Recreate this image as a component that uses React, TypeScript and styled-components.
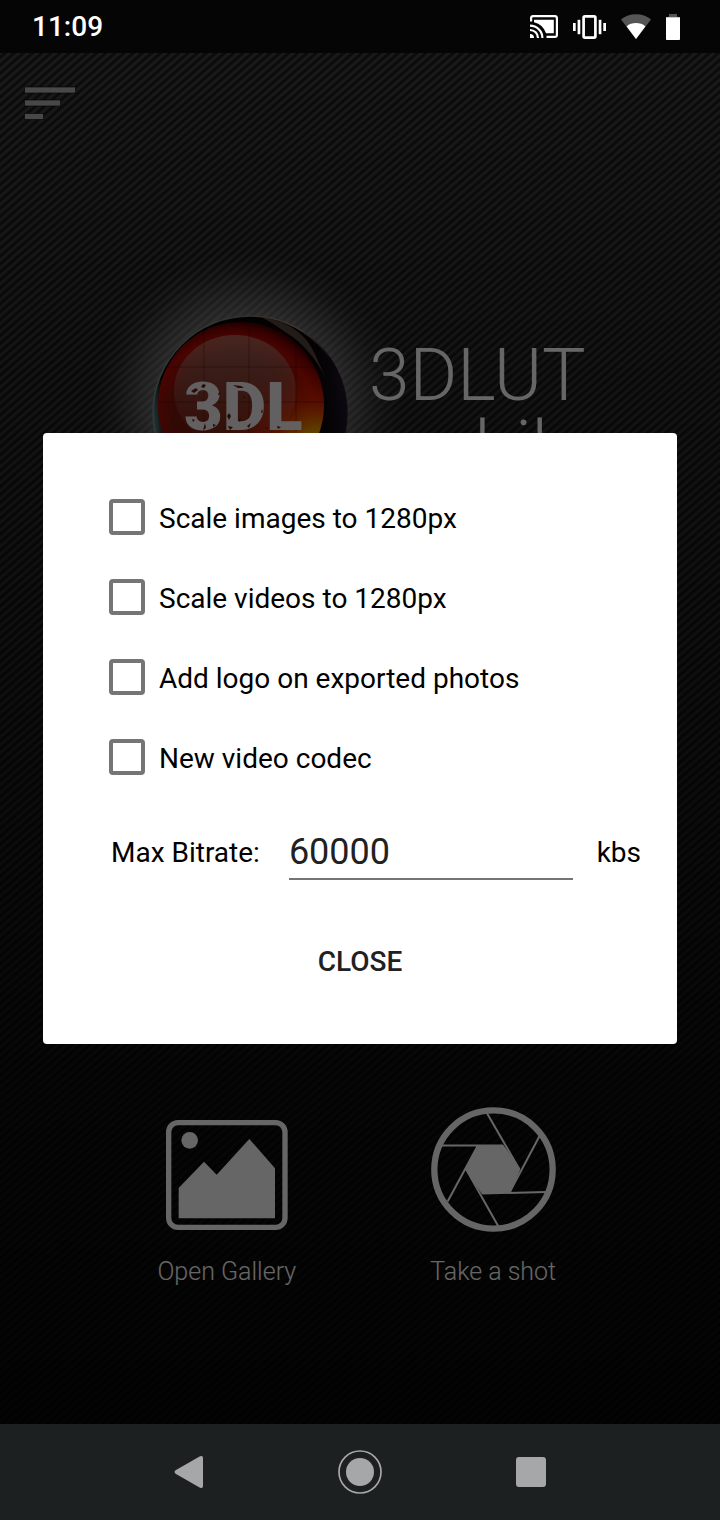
import React from "react";
import styled, { createGlobalStyle } from "styled-components";

const GlobalStyle = createGlobalStyle`
  * { box-sizing: border-box; }
  body { margin: 0; background: #000; font-family: Roboto, sans-serif; }
  button { padding: 0; border: 0; background: none; font: inherit; color: inherit; }
  svg { display: block; }
`;

const Screen = styled.div`
  display: flex;
  flex-direction: column;
  min-height: 100vh;
`;

const StatusBar = styled.header`
  display: flex;
  align-items: center;
  justify-content: space-between;
  height: 53px;
  padding: 0 40px 0 32px;
  background: #050505;
  color: #fff;
`;

const Clock = styled.time`
  font-size: 28px;
  font-weight: 500;
  line-height: 36px;
`;

const StatusIcons = styled.div`
  display: flex;
  align-items: center;
  gap: 15px;
`;

const Stage = styled.div`
  position: relative;
  flex: 1;
  display: flex;
  flex-direction: column;
`;

const Home = styled.main`
  flex: 1;
  display: flex;
  flex-direction: column;
  padding-bottom: 134px;
  overflow: hidden;
  color: #fff;
  background:
    linear-gradient(to bottom, rgba(0, 0, 0, 0) 0%, rgba(0, 0, 0, 0.35) 35%, rgba(0, 0, 0, 0.72) 75%, rgba(0, 0, 0, 0.84) 100%),
    repeating-linear-gradient(139deg, #464646 0px, #424242 1px, #1c1c1c 3px, #1c1c1c 4px, #464646 6px);
`;

const MenuButton = styled.button`
  align-self: flex-start;
  margin: 32px 0 0 24px;
`;

const Brand = styled.section`
  display: flex;
  justify-content: center;
  gap: 20px;
  margin-top: 194px;
  padding-left: 18px;
`;

const BrandName = styled.h1`
  width: 216px;
  margin: 24px 0 0;
  font-size: 73px;
  font-weight: 300;
  line-height: 72px;
`;

const Actions = styled.nav`
  display: flex;
  align-items: flex-end;
  margin-top: auto;
  padding: 0 13%;
`;

const Action = styled.button`
  flex: 1;
  display: flex;
  flex-direction: column;
  align-items: center;
  gap: 22px;
  font-size: 25px;
  font-weight: 300;
  line-height: 36px;
`;

const Scrim = styled.div`
  position: absolute;
  inset: 0;
  display: flex;
  align-items: center;
  padding: 0 43px;
  background: rgba(0, 0, 0, 0.6);
`;

const Dialog = styled.form`
  flex: 1;
  min-width: 0;
  display: flex;
  flex-direction: column;
  padding: 44px 36px 35px 66px;
  border-radius: 4px;
  background: #fff;
  color: #000;
  font-size: 28px;
`;

const Option = styled.label`
  display: flex;
  align-items: center;
  gap: 14px;
  height: 80px;
`;

const OptionText = styled.span`
  padding-top: 2px;
`;

const Checkbox = styled.input`
  appearance: none;
  width: 36px;
  height: 36px;
  margin: 0;
  border: 4px solid #757575;
  border-radius: 4px;
  &:checked { background: #757575; }
`;

const BitrateRow = styled.div`
  display: flex;
  align-items: center;
  height: 80px;
  margin-top: 15px;
  padding-left: 2px;
`;

const BitrateInput = styled.input`
  flex: 1;
  min-width: 0;
  height: 56px;
  margin: 0 24px 0 29px;
  padding: 2px 0 0;
  border: 0;
  border-bottom: 2px solid #757575;
  border-radius: 0;
  outline: 0;
  background: none;
  color: #212121;
  font: 36px Roboto, sans-serif;
`;

const CloseButton = styled.button`
  align-self: center;
  height: 96px;
  margin: 21px 30px 0 0;
  padding: 0 32px;
  color: #212121;
  font-weight: 500;
`;

const NavBar = styled.nav`
  display: flex;
  height: 96px;
  padding: 0 104px;
  background: #1c2021;
`;

const NavButton = styled.button`
  flex: 1;
  display: flex;
  align-items: center;
  justify-content: center;
`;

const CastIcon = () => (
  <svg width="28" height="23" viewBox="0 0 28 23" fill="none" stroke="#fff" strokeWidth="2.2">
    <path d="M1.1 6.5V3a2 2 0 0 1 2-1.9h21.8a2 2 0 0 1 2 1.900v17a2 2 0 0 1-2 1.900H16.500" />
    <path d="M4 4.800h19.800v13.500H16A16.500 16.500 0 0 0 4 7.200z" fill="#fff" stroke="none" />
    <path d="M0 19a4 4 0 0 1 4 4H0z" fill="#fff" stroke="none" />
    <path d="M0 15a8 8 0 0 1 8 8M0 10.600A12.400 12.400 0 0 1 12.400 23" />
  </svg>
);

const VibrateIcon = () => (
  <svg width="33" height="24" viewBox="0 0 33 24" fill="#fff">
    <rect x="10.6" y="1.4" width="11.8" height="21.2" rx="1.4" fill="none" stroke="#fff" strokeWidth="2.7" />
    <rect x="0" y="8" width="2.7" height="8" />
    <rect x="4.6" y="4.8" width="2.7" height="14.4" />
    <rect x="25.7" y="4.8" width="2.7" height="14.4" />
    <rect x="30.3" y="8" width="2.7" height="8" />
  </svg>
);

const WifiIcon = () => (
  <svg width="30" height="25" viewBox="0 0 30 25">
    <path d="M15 25L0 5.6C8-1.5 22-1.5 30 5.6z" fill="#555" />
    <path d="M15 25L5.6 12.4C10.5 8 19.5 8 24.4 12.4z" fill="#fff" />
  </svg>
);

const BatteryIcon = () => (
  <svg width="14" height="26" viewBox="0 0 14 26">
    <path d="M0 3.5L3 2.5V0h8v2.5l3 1z" fill="#555" />
    <path d="M0 3.3h14V25.2a.8.8 0 0 1-.8.8H.8a.8.8 0 0 1-.8-.8z" fill="#fff" />
  </svg>
);

const MenuIcon = () => (
  <svg width="54" height="36" viewBox="0 0 54 36" fill="#b4b4b4" stroke="#000" strokeOpacity="0.6">
    <rect x="0.5" y="2" width="51" height="6" />
    <rect x="0.5" y="15" width="36" height="6" />
    <rect x="0.5" y="28.500" width="19" height="6" />
  </svg>
);

const GalleryIcon = () => (
  <svg width="122" height="112" viewBox="79 59 366 336" fill="#fff">
    <rect x="87" y="67" width="349" height="314" rx="28" fill="none" stroke="#fff" strokeWidth="16" />
    <circle cx="150" cy="120" r="25" />
    <path d="M117 263L193 184l38 39 98-107 77 88v150H117z" />
  </svg>
);

const ApertureIcon = () => (
  <svg width="125" height="125" viewBox="62 50 376 376" fill="none" stroke="#fff">
    <circle cx="250" cy="238" r="178" strokeWidth="19" />
    <path
      d="M230 68L328 237M388 138L299 306M407 306L216 310M264 408L168 238M112 334L203 166M94 166H279"
      strokeWidth="6"
    />
    <path d="M203 167H279L328 237 299 307 216 309 168 238z" fill="#fff" strokeWidth="5" strokeLinejoin="round" />
  </svg>
);

/* Worn patches scratched out of the badge lettering. */
const SCRATCHES =
  "M38 76l5-3 2 2-4 3zM50 69l3 1-2 3-3-1zM80 70l8 1 3 2-6 0zM90 80l2 2-1 2zM76 98l2 3-2 4-2-4zM85 105l3-2-1 4zM75 111l5 1-3 3zM39 104l3 1-2 2zM52 108l1 5-3 2zM94 111l4-3-2 5zM124 111l4 1-3 2zM109 94l1 3-2 1zM66 77l2 2-3 1zM112 112l4 1-3 1zM60 109l3 1-3 2z";

const BadgeLogo = () => (
  <svg width="196" height="196" viewBox="0 0 196 196" overflow="visible" role="img" aria-label="3DL">
    <defs>
      <radialGradient id="glow">
        <stop offset="0.55" stopColor="#fff" stopOpacity="0.36" />
        <stop offset="0.72" stopColor="#fff" stopOpacity="0.2" />
        <stop offset="0.87" stopColor="#fff" stopOpacity="0.06" />
        <stop offset="1" stopColor="#fff" stopOpacity="0" />
      </radialGradient>
      <linearGradient id="rim" x1="0" x2="1" y1="0.5" y2="0.4">
        <stop offset="0" stopColor="#5d8589" />
        <stop offset="0.06" stopColor="#080808" />
        <stop offset="0.85" stopColor="#090407" />
        <stop offset="1" stopColor="#20162a" />
      </linearGradient>
      <linearGradient id="rimEdge" x1="0" x2="1">
        <stop offset="0" stopColor="#709092" />
        <stop offset="0.5" stopColor="#827c70" />
        <stop offset="0.76" stopColor="#a08068" />
        <stop offset="0.92" stopColor="#171014" />
        <stop offset="1" stopColor="#241a2e" />
      </linearGradient>
      <radialGradient id="glass" cx="0.46" cy="0.58" r="0.6">
        <stop offset="0" stopColor="#77200c" />
        <stop offset="0.62" stopColor="#7d160b" />
        <stop offset="0.82" stopColor="#b60b04" />
        <stop offset="0.92" stopColor="#7e0300" />
        <stop offset="1" stopColor="#260000" />
      </radialGradient>
      <radialGradient id="flare" cx="0.96" cy="0.76" r="0.54">
        <stop offset="0" stopColor="#ffe500" />
        <stop offset="0.22" stopColor="#ee9200" />
        <stop offset="0.52" stopColor="#e02a00" stopOpacity="0.8" />
        <stop offset="1" stopColor="#d00800" stopOpacity="0" />
      </radialGradient>
      <linearGradient id="shine" x1="0" y1="0" x2="0" y2="1">
        <stop offset="0" stopColor="#b5b09c" stopOpacity="0.5" />
        <stop offset="0.6" stopColor="#b48c80" stopOpacity="0.25" />
        <stop offset="1" stopColor="#b48c80" stopOpacity="0" />
      </linearGradient>
      <clipPath id="glassClip"><circle cx="88" cy="90" r="83" /></clipPath>
    </defs>
    <circle cx="95" cy="92" r="155" fill="url(#glow)" />
    <circle cx="97" cy="98" r="97" fill="url(#rim)" stroke="url(#rimEdge)" strokeWidth="1.5" />
    <path d="M108 2C135 6 153 19 162 39l11 25C163 43 149 27 132 17 124 11 116 6 108 2z" fill="#6d5548" opacity="0.8" />
    <circle cx="88" cy="90" r="83" fill="url(#glass)" />
    <circle cx="88" cy="90" r="83" fill="url(#flare)" />
    <ellipse cx="82" cy="76" rx="61" ry="56" fill="url(#shine)" />
    <path d="M51 0v180M96 0v180M143 0v180M0 52h180M0 87h180" stroke="#280000" strokeOpacity="0.35" clipPath="url(#glassClip)" />
    <text x="31" y="115" fill="#f4efef" fontFamily="Roboto, sans-serif" fontSize="67" fontWeight="900">3DL</text>
    <path d={SCRATCHES} fill="#74180b" />
  </svg>
);

const OPTIONS = [
  "Scale images to 1280px",
  "Scale videos to 1280px",
  "Add logo on exported photos",
  "New video codec",
];

export default function App() {
  return (
    <Screen>
      <GlobalStyle />
      <StatusBar>
        <Clock>11:09</Clock>
        <StatusIcons>
          <CastIcon />
          <VibrateIcon />
          <WifiIcon />
          <BatteryIcon />
        </StatusIcons>
      </StatusBar>
      <Stage>
        <Home>
          <MenuButton aria-label="Menu"><MenuIcon /></MenuButton>
          <Brand>
            <BadgeLogo />
            <BrandName>3DLUT mobile</BrandName>
          </Brand>
          <Actions>
            <Action><GalleryIcon />Open Gallery</Action>
            <Action><ApertureIcon />Take a shot</Action>
          </Actions>
        </Home>
        <Scrim>
          <Dialog role="dialog" aria-label="Settings" onSubmit={(e) => e.preventDefault()}>
            {OPTIONS.map((text) => (
              <Option key={text}>
                <Checkbox type="checkbox" />
                <OptionText>{text}</OptionText>
              </Option>
            ))}
            <BitrateRow>
              <label htmlFor="bitrate">Max Bitrate:</label>
              <BitrateInput id="bitrate" defaultValue="60000" inputMode="numeric" />
              <span>kbs</span>
            </BitrateRow>
            <CloseButton type="button">CLOSE</CloseButton>
          </Dialog>
        </Scrim>
      </Stage>
      <NavBar>
        <NavButton aria-label="Back">
          <svg width="30" height="34" viewBox="0 0 30 34" fill="#a5a7a8">
            <path d="M1.6 15.3L26 1.3Q29 0 29 3v28q0 3-3 1.7L1.6 18.7Q-.5 17 1.6 15.3z" />
          </svg>
        </NavButton>
        <NavButton aria-label="Home">
          <svg width="44" height="44" viewBox="0 0 44 44" fill="#a5a7a8">
            <circle cx="22" cy="22" r="21" fill="none" stroke="#a5a7a8" strokeWidth="1.7" />
            <circle cx="22" cy="22" r="14" />
          </svg>
        </NavButton>
        <NavButton aria-label="Recent apps">
          <svg width="30" height="30" viewBox="0 0 30 30" fill="#a5a7a8">
            <rect width="30" height="30" rx="3" />
          </svg>
        </NavButton>
      </NavBar>
    </Screen>
  );
}
